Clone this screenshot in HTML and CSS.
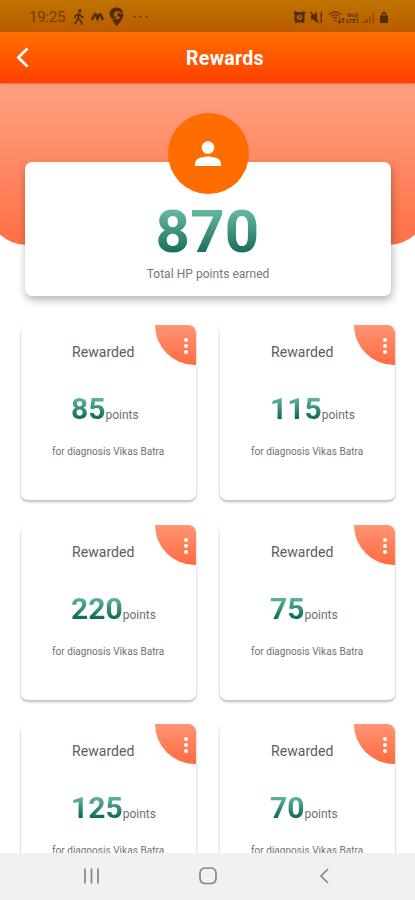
FILE: index.html
```html
<!DOCTYPE html>
<html lang="en">
<head>
<meta charset="utf-8">
<title>Rewards</title>
<link rel="stylesheet" href="styles.css">
</head>
<body>
<div class="screen">
  <div class="status">
    <span class="time">19:25</span>
    <svg class="walk" width="12" height="16" viewBox="0 0 12 16"><circle cx="6.800" cy="2" r="1.700"/><path d="M6 4.500 5 9.500 8 12 9 15.500M5 9.500 3.700 12.500 1.500 15M5.500 5 2.500 6.500 1.800 9M6.500 5 8 7.500 10.800 8.500" fill="none" stroke="#532c05" stroke-width="1.600"/></svg>
    <svg class="moto" width="13" height="9" viewBox="0 0 13 9"><path d="M1 8C2.200 5 3.300 2 4.300 2S5.500 5 6.500 7C7.500 5 7.700 2 8.700 2S10.800 5 12 8" fill="none" stroke="#532c05" stroke-width="2.500"/></svg>
    <svg class="pin" width="15" height="20" viewBox="0 0 15 20"><path d="M7.500.500C3.500.500.500 3 .500 6.800c0 2 1 3.500 2 4.700H7.500V9.800H5.300C4 7 5.500 4.500 8.500 4.500c2 0 3 .500 4 1.300h1.800C13.500 2.500 11 .500 7.500.500z"/><path d="M8.500 6v3.500h2.500c0 1.800-1 2.700-2.500 2.700H3C4.500 15.500 6.500 17.500 7.800 19.300 11 15 14.500 11.500 14.500 7 12 6.200 10 6 8.500 6z"/></svg>
    <svg class="more" width="15" height="3" viewBox="0 0 15 3"><circle cx="1.500" cy="1.500" r="1"/><circle cx="7.500" cy="1.500" r="1"/><circle cx="13.500" cy="1.500" r="1"/></svg>
    <span class="grow"></span>
    <svg class="sys" width="96" height="14" viewBox="0 0 96 14">
      <rect x="1.500" y="2" width="10" height="10.500" rx="2"/><path d="M.800 3.500 3 1.200M10 1.200l2.200 2.300M2.500 12.800l1.200-1.500M10.500 12.800 9.300 11.300" stroke="#532c05" stroke-width="1.600"/><circle cx="6.500" cy="7.300" r="2.700" fill="#b76500"/><path d="M6.500 5v2.500H8.300" fill="none" stroke="#532c05"/>
      <path d="M18 4.800h2.500L24 2v10.500L20.500 9.500H18z"/><path d="m17.500 1.800 8 10.500M28.300 1.500v11.500" fill="none" stroke="#532c05" stroke-width="1.300"/>
      <g fill="none" stroke="#5b3105" stroke-width="1.100"><path d="M36 4.500c3.500-3.500 8.500-3.500 12 0M38 6.500c2.500-2.300 6-2.300 8 0M40 8.300c1.300-1 2.700-1 4 0M42 10l1.500 1.300M46.500 8v5M45 11.500l1.500 1.500 1.500-1.500M50 13V8.500M48.800 10l1.200-1.500 1.200 1.500"/></g>
      <g class="tiny"><text x="54" y="6.500">Vo))</text><text x="53" y="13">LTE1</text></g>
      <path d="M70 13v-2h1.500v2zM73 13V9h1.500v4z" opacity=".7"/><path d="M76 13V6h1.500v7zM79.500 13V2.500H81V13z" opacity=".4"/>
      <path fill-rule="evenodd" d="M87 5.500h1.500C88.500 3 89.300 1.700 91 1.700s2.500 1.300 2.500 3.800H95V13h-8zM90 5.500h2C92 4 91.700 3.200 91 3.200S90 4 90 5.500z"/>
    </svg>
  </div>
  <header class="bar">
    <svg class="back" width="14" height="21" viewBox="0 0 14 21"><path d="M11.500 1.500 2.300 10.500 11.500 19.500" fill="none" stroke="#fff" stroke-width="2.700"/></svg>
    <h1>Rewards</h1>
  </header>
  <main>
    <div class="hero"></div>
    <section class="total">
      <div class="avatar"><svg width="26" height="26" viewBox="0 0 26 26"><circle cx="13" cy="6.500" r="6.300"/><path d="M0 25v-3c0-4.500 8-6.500 13-6.500s13 2 13 6.500v3z"/></svg></div>
      <div class="big">870</div>
      <p>Total HP points earned</p>
    </section>
    <section class="grid">
      <article class="card"><div class="corner"><i></i><i></i><i></i></div><h2>Rewarded</h2><div class="points"><b>85</b><span>points</span></div><p>for diagnosis Vikas Batra</p></article>
      <article class="card"><div class="corner"><i></i><i></i><i></i></div><h2>Rewarded</h2><div class="points"><b>115</b><span>points</span></div><p>for diagnosis Vikas Batra</p></article>
      <article class="card"><div class="corner"><i></i><i></i><i></i></div><h2>Rewarded</h2><div class="points"><b>220</b><span>points</span></div><p>for diagnosis Vikas Batra</p></article>
      <article class="card"><div class="corner"><i></i><i></i><i></i></div><h2>Rewarded</h2><div class="points"><b>75</b><span>points</span></div><p>for diagnosis Vikas Batra</p></article>
      <article class="card"><div class="corner"><i></i><i></i><i></i></div><h2>Rewarded</h2><div class="points"><b>125</b><span>points</span></div><p>for diagnosis Vikas Batra</p></article>
      <article class="card"><div class="corner"><i></i><i></i><i></i></div><h2>Rewarded</h2><div class="points"><b>70</b><span>points</span></div><p>for diagnosis Vikas Batra</p></article>
    </section>
  </main>
  <nav>
    <svg width="18" height="18" viewBox="0 0 18 18"><path d="M3 1.500v15M9.500 1.500v15M16 1.500v15"/></svg>
    <svg width="18" height="18" viewBox="0 0 18 18"><rect x="1" y="1" width="16" height="15.500" rx="5"/></svg>
    <svg width="18" height="18" viewBox="0 0 18 18"><path d="M13 2 6 9l7 7"/></svg>
  </nav>
</div>
</body>
</html>
```
FILE: styles.css
```css
* { box-sizing: border-box; }
body, h1, h2, p { margin: 0; font-weight: 400; }
body { font-family: Roboto, "Liberation Sans", sans-serif; background: #fff; }
.screen { width: 415px; height: 900px; display: flex; flex-direction: column; overflow: hidden; }

.status { flex: none; height: 32px; display: flex; align-items: center; padding: 1px 26px 0 29px; background: linear-gradient(#c07300, #b95b00); fill: #532c05; }
.time { width: 44px; font-size: 15px; color: #6d3c04; letter-spacing: -.2px; }
.moto { margin-left: 6px; }
.pin { margin-left: 5px; }
.more { margin-left: 9px; }
.grow { flex: 1; }
.tiny { font-size: 6px; font-weight: 700; }

.bar { flex: none; height: 51px; display: grid; grid-template-columns: 35px 1fr 25px; align-items: center; padding-left: 16px; background: linear-gradient(#ff7000, #ff4000); color: #fff; position: relative; box-shadow: 0 1px 2px rgba(120, 70, 50, .4); }
.bar h1 { font-size: 19.500px; font-weight: 700; text-align: center; padding-left: 9px; padding-top: 2px; letter-spacing: .3px; }

main { flex: 1; min-height: 0; overflow: hidden; }
.hero { height: 162px; margin: 0 -13px; border-radius: 0 0 40px 40px; background: linear-gradient(#ff9c7c 10%, #ff7046); }
.total { position: relative; width: 366px; height: 134px; margin: -83px auto 0; border-radius: 7px; background: #fff; box-shadow: 1px 4px 8px rgba(0, 0, 0, .3); display: flex; flex-direction: column; align-items: center; }
.avatar { flex: none; width: 81px; height: 81px; margin-top: -49px; margin-left: 1px; border-radius: 50%; background: #ff6d00; display: flex; align-items: center; justify-content: center; fill: #fff; }
.big { font-size: 60px; line-height: 70px; font-weight: 700; margin-top: 3px; letter-spacing: .3px; background: linear-gradient(#68b9a2 18%, #176c5b 80%); -webkit-background-clip: text; color: transparent; }
.total p { font-size: 12px; line-height: 14px; color: #777; letter-spacing: .04px; padding-left: 1px; }

.grid { display: grid; grid-template-columns: 175px 175px; column-gap: 24px; row-gap: 24.500px; padding: 29px 0 0 21px; }
.card { height: 175px; position: relative; border-radius: 7px; background: #fff; box-shadow: 0 2px 3px rgba(0, 0, 0, .27); padding-left: 51px; padding-top: 19px; }
.corner { position: absolute; top: 0; right: 0; width: 41px; height: 40px; border-radius: 0 8px 0 41px; background: linear-gradient(#ff9474, #ff6b40); display: flex; flex-direction: column; align-items: center; gap: 2px; padding: 13px 0 0 20px; }
.corner i { width: 4px; height: 4px; border-radius: 50%; background: #fff; }
.card h2 { font-size: 14px; line-height: 17px; color: #5c5c5c; letter-spacing: .05px; }
.points { display: flex; align-items: baseline; margin-top: 30px; }
.points b { font-size: 30px; line-height: 35px; margin-left: -1px; background: linear-gradient(#60b49c 20%, #0c6a55 80%); -webkit-background-clip: text; color: transparent; }
.points span { font-size: 12px; color: #707070; }
.card p { margin: 19px 0 0 -20px; font-size: 10px; line-height: 13px; color: #707070; letter-spacing: .04px; }

nav { flex: none; height: 47px; background: #f1f1f1; display: flex; justify-content: space-between; align-items: center; padding: 0 82px 2px; fill: none; stroke: #858585; stroke-width: 1.700; }
```
